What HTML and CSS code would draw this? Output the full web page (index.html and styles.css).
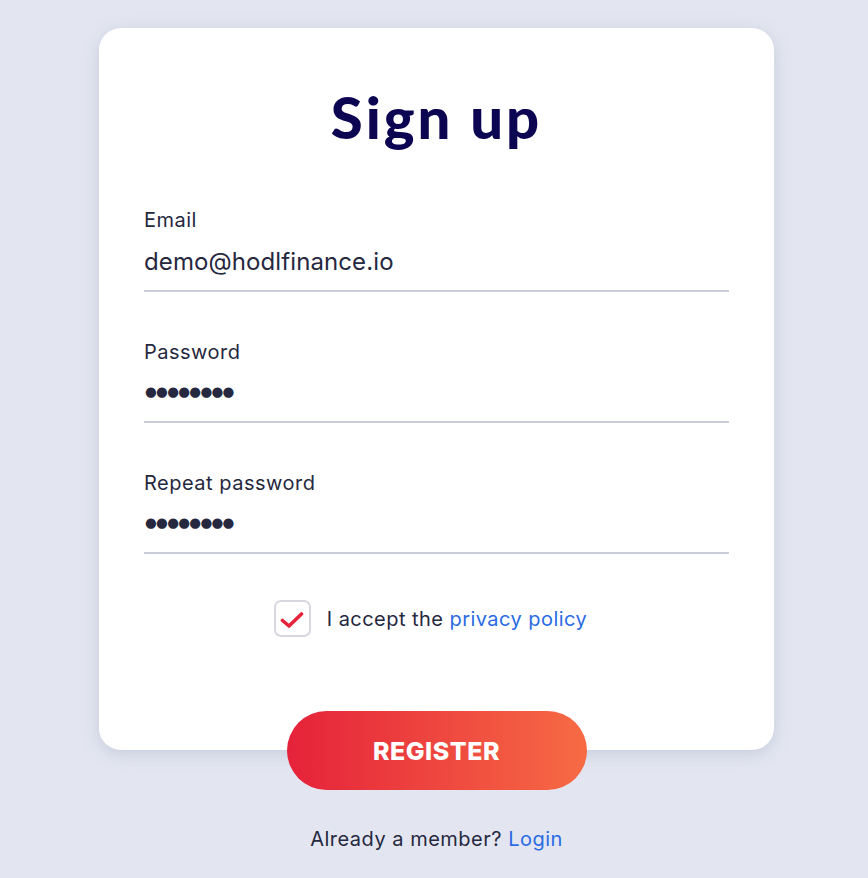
FILE: index.html
```html
<!DOCTYPE html>
<html lang="en">
<head>
<meta charset="utf-8">
<title>Sign up</title>
<link rel="stylesheet" href="styles.css">
</head>
<body>
<main class="page">
  <form class="card">
    <h1 class="title">Sign up</h1>
    <div class="field">
      <label class="label">Email</label>
      <div class="value">demo@hodlfinance.io</div>
    </div>
    <div class="field">
      <label class="label">Password</label>
      <div class="value dots">●●●●●●●●</div>
    </div>
    <div class="field field-last">
      <label class="label">Repeat password</label>
      <div class="value dots">●●●●●●●●</div>
    </div>
    <div class="accept">
      <span class="checkbox">
        <svg width="24" height="18" viewBox="0 0 24 18"><path d="M2.5 9.5 L9 15 L21.5 3" fill="none" stroke="#e6233d" stroke-width="3.6" stroke-linecap="round" stroke-linejoin="round"/></svg>
      </span>
      <span class="accept-text">I accept the <a class="link" href="#">privacy policy</a></span>
    </div>
  </form>
  <button class="register" type="button">REGISTER</button>
  <p class="member">Already a member? <a class="link" href="#">Login</a></p>
</main>
</body>
</html>
```
FILE: styles.css
```css
html, body {
  margin: 0;
  padding: 0;
  background: #e3e6f0;
}
body {
  font-family: "Inter", "Noto Sans", sans-serif;
  color: #262840;
}
.page {
  display: flex;
  flex-direction: column;
  align-items: center;
  padding: 28px 0 0 5px;
}
.card {
  box-sizing: border-box;
  width: 675px;
  background: #ffffff;
  border-radius: 22px;
  box-shadow: 0 4px 16px rgba(150, 158, 190, 0.35);
  padding: 54px 45px 113px;
  display: flex;
  flex-direction: column;
}
.title {
  margin: 0 0 56px;
  text-align: center;
  font-family: "Lato", sans-serif;
  font-weight: 900;
  font-size: 58px;
  line-height: 70px;
  color: #0b0552;
  letter-spacing: 3px;
}
.field {
  display: flex;
  flex-direction: column;
  border-bottom: 2px solid #cbccd9;
  padding-bottom: 13px;
  margin-bottom: 48px;
}
.field-last {
  margin-bottom: 46px;
}
.label {
  font-size: 20px;
  line-height: 24px;
  font-weight: 400;
  letter-spacing: 0.5px;
  color: #262840;
}
.value {
  margin-top: 15px;
  font-size: 24px;
  line-height: 30px;
  color: #262840;
  letter-spacing: 0.1px;
}
.dots {
  margin-top: 12px;
  margin-bottom: 2px;
  font-family: "DejaVu Sans", sans-serif;
  font-size: 13.5px;
  letter-spacing: -0.7px;
  padding-left: 1px;
}
.accept {
  display: flex;
  align-items: center;
  justify-content: center;
  gap: 16px;
  padding-right: 12px;
}
.checkbox {
  box-sizing: border-box;
  width: 37px;
  height: 37px;
  border: 2px solid #d7d8e0;
  border-radius: 7px;
  display: flex;
  align-items: center;
  justify-content: center;
}
.checkbox svg {
  margin-top: 2px;
}
.accept-text {
  font-size: 20px;
  line-height: 24px;
  letter-spacing: 0.45px;
}
.link {
  color: #2a6be3;
  text-decoration: none;
}
.register {
  margin-top: -39px;
  width: 300px;
  height: 79px;
  border: none;
  border-radius: 40px;
  background: linear-gradient(90deg, #e5223a 0%, #f76b44 100%);
  color: #ffffff;
  font-family: "Inter", sans-serif;
  font-weight: 800;
  font-size: 25px;
  letter-spacing: 0.5px;
}
.member {
  margin: 37px 0 0;
  font-size: 20px;
  line-height: 24px;
  letter-spacing: 0.5px;
}
```
